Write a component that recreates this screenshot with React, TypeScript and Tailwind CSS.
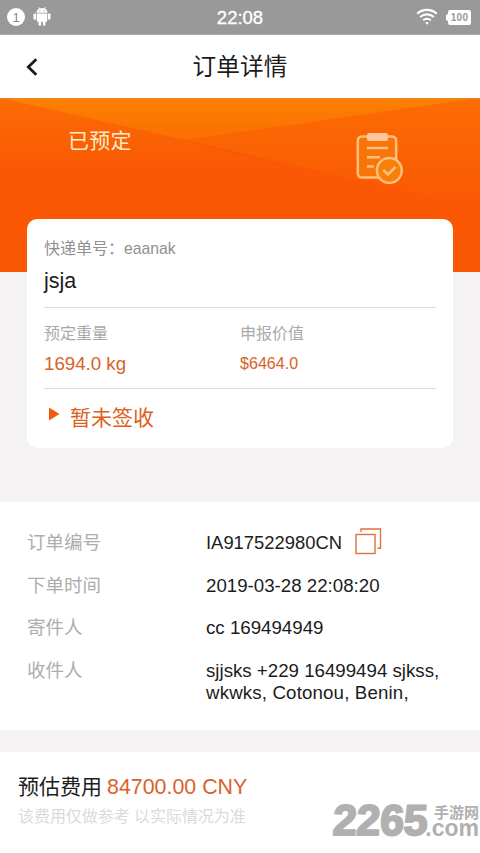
import type { ReactNode } from "react";

const orderRows = [
  { label: "下单时间", value: "2019-03-28 22:08:20" },
  { label: "寄件人", value: "cc 169494949" },
];

function StatusBar() {
  return (
    <div className="box-content flex h-[34px] shrink-0 items-center justify-between border-b border-[#aaaaaa] bg-[#999999] text-white">
      <div className="flex w-[120px] items-center gap-2 pl-[7px]">
        <span className="flex h-[18px] w-[18px] items-center justify-center rounded-full bg-white text-[13px] leading-none text-[#888888]">
          1
        </span>
        <svg width="18" height="19" viewBox="0 0 18 19" fill="white" className="-mt-px">
          <path d="M3.500 5.700C3.500 3.600 4.900 2.400 6 1.800L5.100.5l.6-.4 1.100 1.400a6 6 0 0 1 4.400 0l1.100-1.400.6.4-.9 1.300c1.100.6 2.500 1.800 2.500 3.900z" />
          <path d="M3.800 6.500h10.400v7.200a1 1 0 0 1-1 1h-.7v2.700a1.300 1.300 0 0 1-2.600 0v-2.700H8.100v2.700a1.300 1.300 0 0 1-2.600 0v-2.700h-.7a1 1 0 0 1-1-1z" />
          <rect x="0.500" y="6.400" width="2.600" height="6.300" rx="1.200" />
          <rect x="14.900" y="6.400" width="2.600" height="6.300" rx="1.200" />
          <circle cx="6.900" cy="3.900" r="0.600" fill="#999999" />
          <circle cx="11.100" cy="3.900" r="0.600" fill="#999999" />
        </svg>
      </div>
      <span className="pt-[2px] text-[18.500px] leading-none [-webkit-text-stroke:0.3px_white]">22:08</span>
      <div className="flex w-[120px] items-center justify-end gap-2 pr-[9px]">
        <svg width="22" height="18" viewBox="0 0 22 18" fill="none" stroke="white" strokeWidth="2.200">
          <path d="M1.200 5.700a14.300 14.300 0 0 1 19.600 0" />
          <path d="M4.200 9a10 10 0 0 1 13.600 0" />
          <path d="M7.200 12.200a5.700 5.700 0 0 1 7.600 0" />
          <path d="M9.200 14.700a3 3 0 0 1 3.600 0l-1.800 2.100z" fill="white" stroke="none" />
        </svg>
        <div className="flex items-center">
          <span className="h-[7px] w-[2px] rounded-l-sm bg-white" />
          <span className="flex h-[15px] w-[23px] items-center justify-center rounded-[2px] bg-white pt-px text-[10px] font-bold leading-none tracking-[0.3px] text-[#999999]">
            100
          </span>
        </div>
      </div>
    </div>
  );
}

function Header() {
  return (
    <header className="grid h-[63px] shrink-0 grid-cols-[60px_1fr_60px] items-center bg-white">
      <button className="flex pl-[25px]">
        <svg width="14" height="20" viewBox="0 0 14 20" fill="none" stroke="#1c1c1c" strokeWidth="2.800">
          <path d="M11.300 2.300 3.300 10l8 7.700" />
        </svg>
      </button>
      <h1 className="pt-[3px] text-center text-[23.700px] leading-none text-[#1c1c1c]">订单详情</h1>
    </header>
  );
}

function OrderIcon() {
  return (
    <svg width="48" height="54" viewBox="0 0 48 54" fill="none" stroke="#ffbd80" strokeWidth="2.500">
      <rect x="1.800" y="6.500" width="38.400" height="41" rx="4" fill="#f8750a" />
      <rect x="11" y="3" width="21" height="8" rx="2" fill="#ffc59b" stroke="none" />
      <path d="M11 18h21M11 27.300h13M11 36.500h7" />
      <circle cx="33.300" cy="40.500" r="12.400" fill="#f8800a" />
      <path d="m27.300 40 4.700 4.500 7.500-7.500" />
    </svg>
  );
}

function Hero() {
  return (
    <div className="relative h-[174px] shrink-0 bg-[#fa5804]">
      <svg className="absolute inset-0" width="480" height="174" viewBox="0 0 480 174">
        <defs>
          <linearGradient id="left" gradientUnits="userSpaceOnUse" x1="0" y1="0" x2="0" y2="75">
            <stop offset="0" stopColor="#fb6c04" />
            <stop offset="1" stopColor="#fa5804" />
          </linearGradient>
          <linearGradient id="right" gradientUnits="userSpaceOnUse" x1="0" y1="0" x2="0" y2="110">
            <stop offset="0" stopColor="#fb6c03" />
            <stop offset="1" stopColor="#fa5804" />
          </linearGradient>
          <linearGradient id="top" gradientUnits="userSpaceOnUse" x1="0" y1="0" x2="0" y2="44">
            <stop offset="0" stopColor="#fc8002" />
            <stop offset="1" stopColor="#fb6e03" />
          </linearGradient>
        </defs>
        <path d="M0 0v75h300L185 42z" fill="url(#left)" />
        <path d="M185 42 480 0v110z" fill="url(#right)" />
        <path d="M0 0h480L185 42z" fill="url(#top)" />
        <path d="M0 .5h480" stroke="#e58a25" />
      </svg>
      <div className="relative flex items-start justify-between pl-[68px] pr-[76px] pt-[32px]">
        <span className="text-[21px] leading-none tracking-[0.200px] text-[#ffeacb]">已预定</span>
        <OrderIcon />
      </div>
    </div>
  );
}

function Amount({ label, children }: { label: string; children: ReactNode }) {
  return (
    <div className="flex flex-col">
      <span className="text-[16px] leading-[20px] text-[#a9a9a9]">{label}</span>
      {children}
    </div>
  );
}

function ShipmentCard() {
  return (
    <section className="relative mx-[27px] -mt-[53px] h-[229px] shrink-0 rounded-[10px] bg-white px-[17px] pt-[20px]">
      <p className="text-[16px] leading-[20px] text-[#8f8f8f]">
        快递单号：<span className="text-[15.700px]">eaanak</span>
      </p>
      <p className="mt-[8px] h-[41px] border-b border-[#dddddd] text-[21.500px] leading-[28px] text-[#1c1c1c]">
        jsja
      </p>
      <div className="grid h-[81px] grid-cols-2 border-b border-[#dddddd] pt-[16px]">
        <Amount label="预定重量">
          <span className="mt-[9px] text-[18.700px] leading-[22px] text-[#d8622a]">1694.0 kg</span>
        </Amount>
        <Amount label="申报价值">
          <span className="mt-[8px] text-[16.100px] leading-[22px] text-[#d8622a]">$6464.0</span>
        </Amount>
      </div>
      <div className="flex items-center pl-1 pt-[16px]">
        <svg width="12" height="14" viewBox="0 0 12 14" className="-mt-[8px]" fill="#f05a12">
          <path d="M1 0.500v13L11.500 7z" />
        </svg>
        <span className="ml-[10px] text-[21px] leading-[26px] text-[#dd5f20]">暂未签收</span>
      </div>
    </section>
  );
}

function OrderInfo() {
  return (
    <section className="mt-[54px] flex h-[228px] shrink-0 flex-col gap-[17px] bg-white pl-[27px] pt-[28px] text-[18.500px] leading-[26px] text-[#1c1c1c]">
      <div className="flex h-[26px]">
        <span className="w-[179px] text-[#adadad]">订单编号</span>
        <span className="text-[18.400px]">IA917522980CN</span>
        <svg
          width="28"
          height="28"
          viewBox="0 0 28 28"
          className="-mt-[3px] ml-3"
          fill="none"
          stroke="#df713a"
          strokeWidth="1.400"
        >
          <rect x="2" y="7.500" width="19" height="19" />
          <path d="M7 5V2h19.500v19.300H23.500" />
        </svg>
      </div>
      {orderRows.map((row) => (
        <div key={row.label} className="flex h-[26px] last-of-type:mt-0 [&:nth-child(3)]:-mt-px">
          <span className="w-[179px] text-[#adadad]">{row.label}</span>
          <span className="text-[18.700px]">{row.value}</span>
        </div>
      ))}
      <div className="flex">
        <span className="w-[179px] text-[#adadad]">收件人</span>
        <p className="pt-[2px] text-[18.700px] leading-[22px]">
          sjjsks +229 16499494 sjkss,
          <br />
          <span className="tracking-[0.150px]">wkwks, Cotonou, Benin,</span>
        </p>
      </div>
    </section>
  );
}

function Watermark() {
  return (
    <div className="absolute bottom-[15px] right-[1px] flex items-end text-[#b0b0b0]">
      <span className="-mr-[2px] -skew-x-3 text-[43px] font-bold leading-[36px] tracking-[-0.300px] [-webkit-text-stroke:2px_#b0b0b0]">
        2265
      </span>
      <span className="flex flex-col items-end">
        <span className="text-[15px] font-bold leading-[12px]">手游网</span>
        <span className="text-[23px] font-bold leading-[19px]">.com</span>
      </span>
    </div>
  );
}

function Footer() {
  return (
    <footer className="relative mt-[22px] flex-1 bg-white pl-[18px] pt-[22px]">
      <p className="flex items-baseline gap-[5px] leading-[26px]">
        <span className="text-[21px] text-[#1c1c1c]">预估费用</span>
        <span className="text-[21.400px] text-[#d8622a]">84700.00 CNY</span>
      </p>
      <p className="mt-[7px] text-[16px] leading-[20px] tracking-[-0.050px] text-[#dadada]">
        该费用仅做参考 以实际情况为准
      </p>
      <Watermark />
    </footer>
  );
}

export default function App() {
  return (
    <main className="flex h-[853px] w-[480px] flex-col overflow-hidden bg-[#f4f2f3] font-['Liberation_Sans','Noto_Sans_CJK_SC',sans-serif]">
      <StatusBar />
      <Header />
      <Hero />
      <ShipmentCard />
      <OrderInfo />
      <Footer />
    </main>
  );
}
